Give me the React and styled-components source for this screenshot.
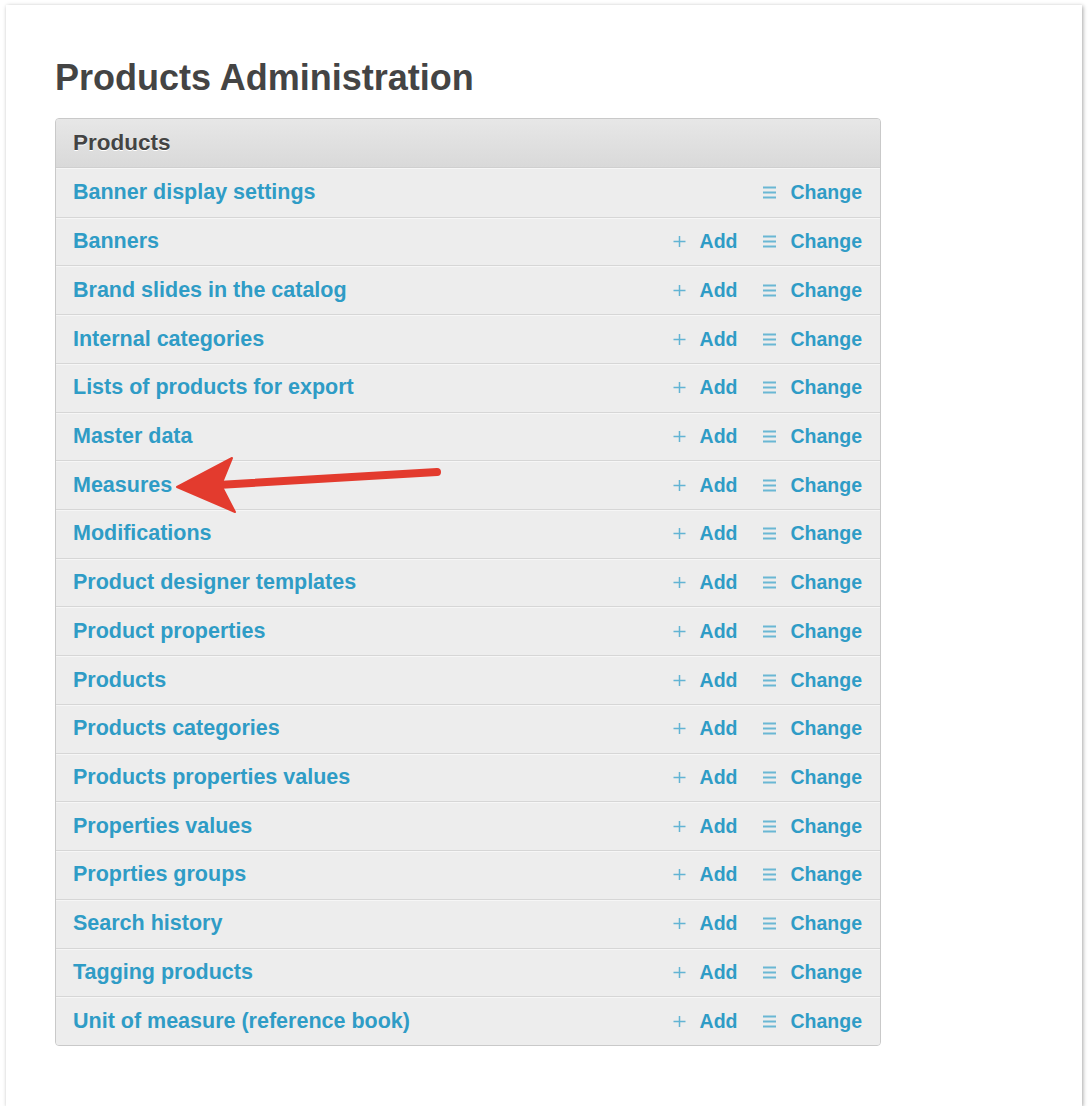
import React from 'react'
import styled, { createGlobalStyle } from 'styled-components'

const GlobalStyle = createGlobalStyle`
  html, body {
    margin: 0;
    padding: 0;
    background: #ffffff;
  }
  body {
    font-family: "Liberation Sans", Arial, Helvetica, sans-serif;
  }
`

const Page = styled.div`
  position: relative;
  box-sizing: border-box;
  margin: 5px 0 0 6px;
  width: 1076px;
  height: 1101px;
  padding: 53px 0 0 49px;
  background: #fff;
  box-shadow: 1px 1px 4px rgba(0, 0, 0, 0.35);
`

const Title = styled.h1`
  margin: 0 0 20px;
  font-size: 36px;
  line-height: 40px;
  font-weight: 700;
  color: #444444;
`

const Panel = styled.div`
  width: 826px;
  box-sizing: border-box;
  border: 1px solid #c9c9c9;
  border-radius: 4px;
  overflow: hidden;
  background: #ededed;
`

const PanelHeader = styled.div`
  height: 48px;
  display: flex;
  align-items: center;
  padding: 0 17px;
  background: linear-gradient(to bottom, #e7e7e7, #d9d9d9);
  border-bottom: 1px solid #cfcfcf;
  font-size: 22.5px;
  font-weight: 700;
  color: #444444;
  text-shadow: 0 1px 0 #ffffff;
`

const Row = styled.div`
  box-sizing: border-box;
  height: 48.72px;
  display: flex;
  align-items: center;
  padding: 0 18px 0 17px;
  border-top: ${(p) => (p.first ? 'none' : '1px solid #d6d6d6')};
  box-shadow: inset 0 1px 0 #f6f6f6;
  background: #ededed;
`

const ModelLink = styled.a`
  flex: 1;
  font-size: 21.5px;
  font-weight: 700;
  color: #2f9cc6;
  text-decoration: none;
  white-space: nowrap;
`

const Actions = styled.div`
  display: flex;
  align-items: center;
  gap: 26px;
`

const ActionLink = styled.a`
  display: inline-flex;
  align-items: center;
  gap: 14px;
  font-size: 19.5px;
  font-weight: 700;
  color: #2f9cc6;
  text-decoration: none;
  white-space: nowrap;
`

const Arrow = styled.svg`
  position: absolute;
  left: 0;
  top: 0;
  pointer-events: none;
`

const PlusIcon = () => (
  <svg width="13" height="13" viewBox="0 0 13 13">
    <path d="M6.5 1v11M0.5 6.5h12" stroke="#62b4d4" strokeWidth="1.5" fill="none" />
  </svg>
)

const ListIcon = () => (
  <svg width="13" height="13" viewBox="0 0 13 13">
    <path d="M0 1.5h13M0 6.5h13M0 11.5h13" stroke="#6ab7d4" strokeWidth="1.8" fill="none" />
  </svg>
)

const models = [
  { name: 'Banner display settings', add: false },
  { name: 'Banners' },
  { name: 'Brand slides in the catalog' },
  { name: 'Internal categories' },
  { name: 'Lists of products for export' },
  { name: 'Master data' },
  { name: 'Measures' },
  { name: 'Modifications' },
  { name: 'Product designer templates' },
  { name: 'Product properties' },
  { name: 'Products' },
  { name: 'Products categories' },
  { name: 'Products properties values' },
  { name: 'Properties values' },
  { name: 'Proprties groups' },
  { name: 'Search history' },
  { name: 'Tagging products' },
  { name: 'Unit of measure (reference book)' },
]

export default function App() {
  return (
    <>
      <GlobalStyle />
      <Page>
        <Title>Products Administration</Title>
        <Panel>
          <PanelHeader>Products</PanelHeader>
          {models.map((m, i) => (
            <Row key={m.name} first={i === 0}>
              <ModelLink href="#">{m.name}</ModelLink>
              <Actions>
                {m.add !== false && (
                  <ActionLink href="#">
                    <PlusIcon />
                    Add
                  </ActionLink>
                )}
                <ActionLink href="#">
                  <ListIcon />
                  Change
                </ActionLink>
              </Actions>
            </Row>
          ))}
        </Panel>
        <Arrow width="1076" height="1101" viewBox="6 5 1076 1101">
          <path d="M437 472 L218 485" stroke="#e33b2e" strokeWidth="8" strokeLinecap="round" fill="none" />
          <path d="M177 487 L232 458 L221 485 L235 512 Z" fill="#e33b2e" stroke="#e33b2e" strokeWidth="2" strokeLinejoin="round" />
        </Arrow>
      </Page>
    </>
  )
}
